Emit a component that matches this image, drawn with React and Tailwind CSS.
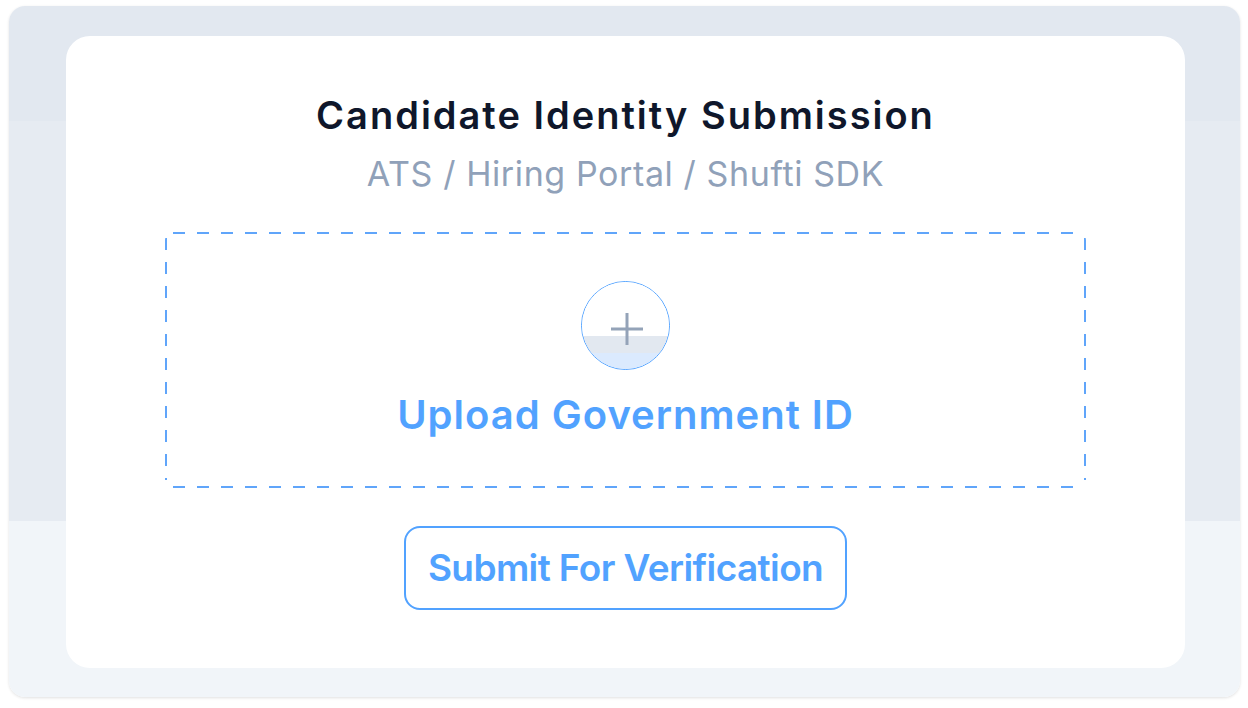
import React from "react";

function UploadIcon() {
  return (
    <div className="relative w-[89px] h-[89px] rounded-full border border-blue-400 overflow-hidden flex flex-col">
      <div className="flex-1 bg-white" />
      <div className="h-[17px] bg-slate-200" />
      <div className="h-[16px] bg-blue-100" />
      <svg
        className="absolute left-[28px] top-[30px]"
        width="34"
        height="34"
        viewBox="0 0 34 34"
        fill="none"
        stroke="#94a3b8"
        strokeWidth="3"
      >
        <path d="M17 1v32M1 17h32" />
      </svg>
    </div>
  );
}

export default function App() {
  return (
    <div className="w-[1248px] h-[708px] bg-white pt-[6px] pl-[9px] font-['Inter',_'Liberation_Sans',_sans-serif]">
      <div className="w-[1231px] h-[691px] rounded-2xl shadow-[0_1px_3px_rgba(0,0,0,0.12)] bg-[linear-gradient(to_bottom,#e2e8f0_0px,#e2e8f0_115px,#e6ebf2_115px,#e6ebf2_515px,#f1f5f9_515px)] pt-[30px] pl-[57px]">
        <div className="w-[1119px] h-[632px] bg-white rounded-3xl flex flex-col items-center pt-[55px]">
          <h1 className="text-[38px] leading-[48px] font-semibold text-slate-900 tracking-[2px]">
            Candidate Identity Submission
          </h1>
          <p className="mt-[15px] text-[34px] leading-[40px] text-slate-400 tracking-[0.6px]">
            ATS / Hiring Portal / Shufti SDK
          </p>
          <div className="mt-[38px] w-[921px] h-[256px] rounded-lg flex flex-col items-center pt-[49px] bg-no-repeat bg-[image:repeating-linear-gradient(90deg,#60a5fa_0_12px,transparent_12px_24px),repeating-linear-gradient(90deg,#60a5fa_0_12px,transparent_12px_24px),repeating-linear-gradient(180deg,#60a5fa_0_12px,transparent_12px_24px),repeating-linear-gradient(180deg,#60a5fa_0_12px,transparent_12px_24px)] bg-[length:905px_2px,905px_2px,2px_242px,2px_242px] bg-[position:8px_0,8px_100%,0_6px,100%_6px]">
            <UploadIcon />
            <div className="mt-[21px] text-[40px] leading-[48px] font-semibold text-blue-400 tracking-[1px]">
              Upload Government ID
            </div>
          </div>
          <button className="mt-[38px] w-[443px] h-[84px] border-2 border-blue-400 rounded-2xl text-[37px] font-semibold text-blue-400 tracking-[-0.6px]">
            Submit For Verification
          </button>
        </div>
      </div>
    </div>
  );
}
